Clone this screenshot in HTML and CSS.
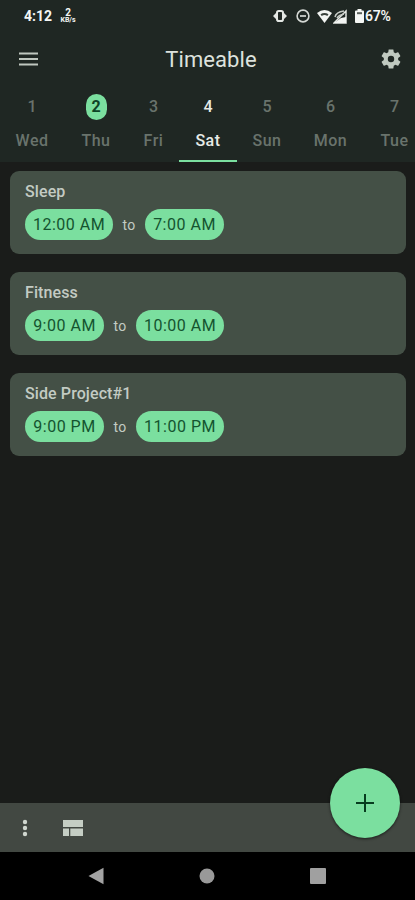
FILE: index.html
```html
<!DOCTYPE html>
<html lang="en">
<head>
<meta charset="utf-8">
<title>Timeable</title>
<link rel="stylesheet" href="styles.css">
</head>
<body>
<div class="app">
  <header class="header">
    <div class="status">
      <div class="status-left">
        <span class="clock">4:12</span>
        <span class="speed"><span class="speed-num">2</span><span class="speed-unit">KB/s</span></span>
      </div>
      <div class="status-right">
        <svg class="vibrate" width="14" height="12" viewBox="0 0 14 12"><rect x="4" y="1" width="6" height="10" rx="1.8" fill="none" stroke="#e4e8e4" stroke-width="2"/><path d="M3 3v6L0 6zM11 3v6l3-3z" fill="#e4e8e4"/></svg>
        <svg class="dnd" width="14" height="14" viewBox="0 0 14 14"><circle cx="7" cy="7" r="5.9" fill="none" stroke="#d5d9d5" stroke-width="1.6"/><path d="M4 7h6" stroke="#d5d9d5" stroke-width="1.7"/></svg>
        <svg class="wifi" width="15" height="14" viewBox="0 0 15 14"><path d="M0 4Q7.500-2 15 4L7.500 14z" fill="#f2f4f2"/><path d="M3.500 5.200Q7.500 2.700 11.500 5.200L10.300 7Q7.500 5 4.700 7z" fill="#39413c"/></svg>
        <svg class="signal" width="14" height="15" viewBox="0 0 14 15"><path d="M1 14L13 2v12z" fill="none" stroke="#e4e8e4" stroke-width="1.500"/><path d="M1 14l7-5 5-1v6z" fill="#f2f4f2"/><path d="M2 8q1-5 9-6M4 9q2-3 7-4" fill="none" stroke="#c5cac5" stroke-width="1.500"/></svg>
        <svg class="battery" width="9" height="14" viewBox="0 0 9 14"><path d="M2.500 0h4v1.500H8q1 0 1 1V13q0 1-1 1H1q-1 0-1-1V2.500q0-1 1-1h1.500z" fill="#f4f6f4"/><path d="M2 3.200h5v2H2z" fill="#59605b"/></svg>
        <span class="percent">67%</span>
      </div>
    </div>
    <div class="appbar">
      <svg class="menu" width="19" height="14" viewBox="0 0 19 14"><path d="M0 1.500h19M0 7h19M0 12.500h19" stroke="#bfc7bf" stroke-width="2"/></svg>
      <h1>Timeable</h1>
      <svg class="gear" width="24" height="24" viewBox="0 0 24 24"><path fill="#c0c9c0" d="M19.140 12.940c.04-.3.060-.61.060-.94 0-.32-.02-.64-.07-.94l2.030-1.580c.18-.14.230-.41.120-.61l-1.920-3.320c-.12-.22-.37-.29-.59-.22l-2.390.96c-.5-.38-1.030-.7-1.620-.94l-.36-2.540c-.04-.24-.24-.41-.48-.41h-3.840c-.24 0-.43.170-.47.410l-.36 2.540c-.59.240-1.130.570-1.620.940l-2.390-.96c-.22-.08-.47 0-.59.220L2.740 8.870c-.12.210-.08.470.120.610l2.030 1.580c-.05.300-.09.630-.09.940s.02.640.070.940l-2.030 1.580c-.18.140-.23.410-.12.610l1.920 3.320c.12.220.370.290.590.220l2.390-.96c.5.380 1.030.700 1.620.940l.36 2.540c.05.240.240.410.480.410h3.840c.24 0 .44-.17.470-.41l.36-2.540c.59-.24 1.130-.56 1.620-.94l2.390.96c.22.080.470 0 .59-.22l1.920-3.320c.12-.22.070-.47-.12-.61l-2.010-1.580zM12 15.200A3.200 3.200 0 1 1 12 8.800a3.200 3.200 0 0 1 0 6.400z"/></svg>
    </div>
    <nav class="days">
      <div class="day"><span class="num">1</span><span>Wed</span></div>
      <div class="day"><span class="num today">2</span><span>Thu</span></div>
      <div class="day"><span class="num">3</span><span>Fri</span></div>
      <div class="day selected"><span class="num">4</span><span>Sat</span></div>
      <div class="day"><span class="num">5</span><span>Sun</span></div>
      <div class="day"><span class="num">6</span><span>Mon</span></div>
      <div class="day"><span class="num">7</span><span>Tue</span></div>
    </nav>
  </header>
  <main class="list">
    <section class="card">
      <h2>Sleep</h2>
      <div class="times"><span class="chip wide">12:00 AM</span><span class="to">to</span><span class="chip">7:00 AM</span></div>
    </section>
    <section class="card">
      <h2>Fitness</h2>
      <div class="times"><span class="chip">9:00 AM</span><span class="to">to</span><span class="chip wide">10:00 AM</span></div>
    </section>
    <section class="card">
      <h2>Side Project#1</h2>
      <div class="times"><span class="chip">9:00 PM</span><span class="to">to</span><span class="chip wide">11:00 PM</span></div>
    </section>
  </main>
  <footer class="bottombar">
    <svg class="more" width="6" height="18" viewBox="0 0 6 18"><g fill="#d0d7cf"><circle cx="3" cy="3" r="2.200"/><circle cx="3" cy="9" r="2.200"/><circle cx="3" cy="15" r="2.200"/></g></svg>
    <svg class="layout" width="20" height="16" viewBox="0 0 20 16"><path fill="#c5cec4" d="M0 0h20v7H0zM0 8.500h6V16H0zM7.300 8.500H20V16H7.300z"/></svg>
    <button class="fab" aria-label="Add"><svg width="18" height="18" viewBox="0 0 18 18"><path d="M9 0v18M0 9h18" stroke="#073d1f" stroke-width="2"/></svg></button>
  </footer>
  <div class="navbar">
    <svg width="16" height="18" viewBox="0 0 16 18"><path d="M15.500 .8v16.400L.5 9z" fill="#a3a3a3"/></svg>
    <svg width="16" height="16" viewBox="0 0 16 16"><circle cx="8" cy="8" r="7.500" fill="#999"/></svg>
    <svg width="16" height="16" viewBox="0 0 16 16"><rect width="16" height="16" rx="1" fill="#a0a0a0"/></svg>
  </div>
</div>
</body>
</html>
```
FILE: styles.css
```css
* { box-sizing: border-box; }
body { margin: 0; background: #1a1c1a; font-family: Roboto, sans-serif; }
svg { display: block; flex: none; }
.app { width: 415px; height: 900px; display: flex; flex-direction: column; overflow: hidden; }
.header { height: 162px; background: #1f2723; }
.status { height: 32px; display: flex; justify-content: space-between; padding: 0 23px 0 24px; }
.status-left, .status-right { display: flex; align-items: center; color: #f4f6f4; }
.clock { font-size: 14px; font-weight: 700; width: 36px; }
.speed { display: flex; flex-direction: column; align-items: center; width: 16px; font-weight: 700; }
.speed-num { font-size: 10px; line-height: 8px; }
.speed-unit { font-size: 7px; line-height: 7px; }
.dnd { margin-left: 9px; }
.wifi { margin-left: 7px; }
.signal { margin-left: 1px; }
.battery { margin-left: 8px; }
.percent { font-size: 14px; font-weight: 600; width: 27px; margin-left: 1px; letter-spacing: -.3px; }
.appbar { height: 54px; display: grid; grid-template-columns: 24px 1fr 24px; align-items: center; padding: 0 12px 0 19px; }
.menu { margin-left: 0; }
.appbar h1 { margin: 0; text-align: center; font-size: 22px; font-weight: 400; color: #dde2dd; letter-spacing: .1px; }
.days { display: grid; grid-template-columns: 64px 64px 51px 58px 60px 67px 61px; height: 76px; overflow: hidden; }
.day { display: flex; flex-direction: column; align-items: center; padding-top: 8px; font-size: 16px; font-weight: 500; line-height: 24px; letter-spacing: .5px; color: #69736c; border-bottom: 2px solid transparent; }
.num { width: 21px; height: 26px; line-height: 26px; margin-bottom: 9px; text-align: center; letter-spacing: 0; }
.today { background: #7bdf9f; color: #0d4325; border-radius: 11px; font-weight: 700; }
.selected { color: #e6eae6; border-bottom-color: #7bdf9f; height: 76px; }
.list { flex: 1; padding: 9px 9px 0 10px; display: flex; flex-direction: column; gap: 18px; }
.card { height: 83px; border-radius: 9px; background: #445046; padding: 10px 15px; }
.card h2 { margin: 0 0 6px; font-size: 16px; line-height: 22px; font-weight: 500; color: #c3cbc3; letter-spacing: .1px; }
.times { display: flex; align-items: center; }
.chip { width: 79px; height: 31px; border-radius: 16px; background: #7bdf9f; color: #14542f; font-size: 16px; line-height: 31px; text-align: center; letter-spacing: .5px; white-space: nowrap; }
.wide { width: 88px; }
.to { width: 32px; text-align: center; color: #c3cbc3; font-size: 14px; letter-spacing: .3px; }
.bottombar { position: relative; height: 49px; background: #424842; display: flex; align-items: center; padding-left: 22px; }
.layout { margin-left: 35px; }
.fab { position: absolute; right: 15px; top: -35px; width: 70px; height: 70px; border: 0; padding: 0; border-radius: 50%; background: #7bdf9f; display: flex; align-items: center; justify-content: center; box-shadow: 0 1px 3px #0009; }
.navbar { height: 48px; background: #000; display: flex; align-items: center; justify-content: space-between; padding: 0 89px 0 88px; }
```
